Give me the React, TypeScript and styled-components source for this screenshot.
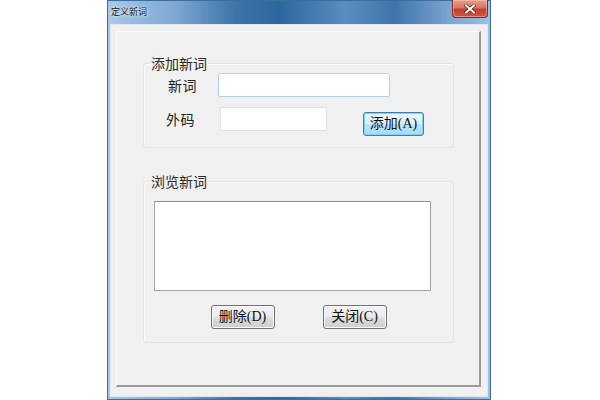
import React from "react";
import styled, { createGlobalStyle } from "styled-components";

const Global = createGlobalStyle`
  html, body { margin: 0; padding: 0; background: #ffffff; }
  body { font-family: "Noto Sans CJK SC", "Noto Sans", sans-serif; }
`;

const Page = styled.div`
  width: 600px;
  height: 400px;
  display: flex;
  padding-left: 107px;
  box-sizing: border-box;
`;

const Window = styled.div`
  width: 384px;
  height: 400px;
  box-sizing: border-box;
  display: flex;
  flex-direction: column;
  padding: 0 3px 3px 3px;
  background: linear-gradient(
    90deg,
    #a9c8e6 0%,
    #7ea7d1 18%,
    #3f74aa 33%,
    #2c679f 45%,
    #5a8dc0 62%,
    #3f74ab 75%,
    #7fa7d2 90%,
    #9dbfe2 100%
  );
  box-shadow: inset 0 0 0 1px #3b6e9f;
`;

const TitleBar = styled.div`
  height: 24px;
  display: flex;
  align-items: flex-start;
  justify-content: space-between;
  margin: 0 -1px;
`;

const Title = styled.span`
  font-size: 9px;
  line-height: 10px;
  margin-top: 7px;
  margin-left: 2px;
  color: #111;
  text-shadow: 0 0 4px rgba(255, 255, 255, 0.9), 0 0 2px rgba(255, 255, 255, 0.9);
`;

const CloseButton = styled.div`
  width: 36px;
  height: 18px;
  box-sizing: border-box;
  margin-right: 1px;
  border: 1px solid #7b2b20;
  border-top: none;
  border-radius: 0 0 4px 4px;
  background: linear-gradient(180deg, #e8a08c 0%, #d67560 45%, #c1402f 55%, #c9574a 100%);
  box-shadow: inset 0 0 0 1px rgba(255, 200, 190, 0.5);
  display: flex;
  align-items: center;
  justify-content: center;
`;

const Client = styled.div`
  flex: 1;
  display: flex;
  flex-direction: column;
  background: #f0f0f0;
  border: 1px solid #dfe8f1;
  padding: 6px 6px 9px 5px;
`;

const InnerFrame = styled.div`
  flex: 1;
  display: flex;
  flex-direction: column;
  border-top: 1px solid #fbfbfb;
  border-left: 1px solid #fbfbfb;
  border-right: 2px solid #9b9b9b;
  border-bottom: 2px solid #9b9b9b;
  padding: 0 25px 0 26px;
`;

const GroupBox = styled.div<{ $top: number; $pt: number; $pb: number }>`
  position: relative;
  margin-top: ${(p) => p.$top}px;
  border: 1px solid #dde4ea;
  border-radius: 3px;
  box-shadow: inset 1px 1px 0 #fafafa;
  padding: ${(p) => p.$pt}px 0 ${(p) => p.$pb}px 0;
  display: flex;
  flex-direction: column;
`;

const Legend = styled.span`
  position: absolute;
  left: 6px;
  top: -10px;
  padding: 0 1px;
  background: #f0f0f0;
  font-size: 14px;
  line-height: 18px;
  color: #2a2a2a;
`;

const FieldRow = styled.div<{ $indent: number; $labelWidth: number; $mt: number }>`
  display: flex;
  align-items: flex-start;
  margin-top: ${(p) => p.$mt}px;
  padding-left: ${(p) => p.$indent}px;
  & > label {
    width: ${(p) => p.$labelWidth}px;
  }
`;

const Label = styled.label`
  font-size: 14px;
  line-height: 24px;
  color: #222;
  letter-spacing: 0.5px;
`;

const TextBox = styled.div<{ $w: number; $h: number; $focused?: boolean }>`
  width: ${(p) => p.$w}px;
  height: ${(p) => p.$h}px;
  box-sizing: border-box;
  background: #ffffff;
  border: 1px solid ${(p) => (p.$focused ? "#b6d0ea" : "#e0e2e8")};
  border-radius: 2px;
`;

const Button = styled.div<{ $hot?: boolean; $mt?: number; $ml?: number }>`
  width: ${(p) => (p.$hot ? 61 : 64)}px;
  height: 24px;
  box-sizing: border-box;
  margin-top: ${(p) => p.$mt ?? 0}px;
  margin-left: ${(p) => p.$ml ?? 0}px;
  border: 1px solid ${(p) => (p.$hot ? "#3c7fb1" : "#707070")};
  border-radius: 3px;
  background: ${(p) =>
    p.$hot
      ? "linear-gradient(180deg, #eaf6fd 0%, #d9f0fc 50%, #bee6fd 51%, #a7d9f5 100%)"
      : "linear-gradient(180deg, #f2f2f2 0%, #ebebeb 50%, #dddddd 51%, #cfcfcf 100%)"};
  box-shadow: inset 0 0 0 1px ${(p) => (p.$hot ? "#7fd3f5" : "#fcfcfc")};
  display: flex;
  align-items: center;
  justify-content: center;
  font-family: "Liberation Serif", "Noto Sans CJK SC", serif;
  font-size: 14px;
  line-height: 16px;
  color: #111;
`;

const ListBox = styled.div`
  width: 277px;
  height: 90px;
  box-sizing: border-box;
  margin-left: 10px;
  background: #ffffff;
  border: 1px solid #a3a3a8;
  border-top-color: #94949a;
`;

const ButtonRow = styled.div`
  display: flex;
  justify-content: center;
  gap: 48px;
  margin-top: 14px;
`;

export default function App() {
  return (
    <>
      <Global />
      <Page>
        <Window>
          <TitleBar>
            <Title>定义新词</Title>
            <CloseButton>
              <svg width="12" height="10" viewBox="0 0 12 10">
                <path
                  d="M2 1.5 L10 8.5 M10 1.5 L2 8.5"
                  stroke="#5a1a14"
                  strokeWidth="3.4"
                  strokeLinecap="square"
                />
                <path
                  d="M2 1.5 L10 8.5 M10 1.5 L2 8.5"
                  stroke="#ffffff"
                  strokeWidth="2"
                  strokeLinecap="square"
                />
              </svg>
            </CloseButton>
          </TitleBar>
          <Client>
            <InnerFrame>
              <GroupBox $top={31} $pt={9} $pb={11}>
                <Legend>添加新词</Legend>
                <FieldRow $indent={24} $labelWidth={50} $mt={0}>
                  <Label>新词</Label>
                  <TextBox $w={172} $h={24} $focused />
                </FieldRow>
                <FieldRow $indent={22} $labelWidth={54} $mt={10}>
                  <Label>外码</Label>
                  <TextBox $w={107} $h={24} />
                  <Button $hot $mt={5} $ml={36}>添加(A)</Button>
                </FieldRow>
              </GroupBox>
              <GroupBox $top={33} $pt={19} $pb={13}>
                <Legend>浏览新词</Legend>
                <ListBox />
                <ButtonRow>
                  <Button>删除(D)</Button>
                  <Button>关闭(C)</Button>
                </ButtonRow>
              </GroupBox>
            </InnerFrame>
          </Client>
        </Window>
      </Page>
    </>
  );
}
